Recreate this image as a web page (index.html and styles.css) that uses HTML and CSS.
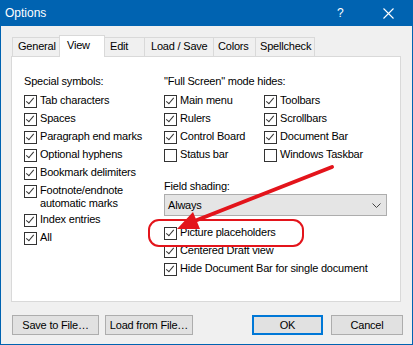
FILE: index.html
```html
<!DOCTYPE html>
<html>
<head>
<meta charset="utf-8">
<title>Options</title>
<link rel="stylesheet" href="styles.css">
</head>
<body>
<div class="window">
  <div class="titlebar">
    <span class="title">Options</span>
    <span class="help">?</span>
    <span class="close"><svg width="11" height="11" viewBox="0 0 11 11"><path d="M0.5 0.5L10.5 10.5M10.5 0.5L0.5 10.5" stroke="#fff" stroke-width="1.1" fill="none"/></svg></span>
  </div>
  <div class="content">
    <div class="tabs">
      <div class="tab t-general">General</div>
      <div class="tab t-view active">View</div>
      <div class="tab t-edit">Edit</div>
      <div class="tab t-load">Load / Save</div>
      <div class="tab t-colors">Colors</div>
      <div class="tab t-spell">Spellcheck</div>
    </div>
    <div class="panel">
      <div class="col col-left">
        <div class="group-label">Special symbols:</div>
        <div class="list">
          <div class="cb-row"><span class="cb on"></span><span class="lbl">Tab characters</span></div>
          <div class="cb-row"><span class="cb on"></span><span class="lbl">Spaces</span></div>
          <div class="cb-row"><span class="cb on"></span><span class="lbl">Paragraph end marks</span></div>
          <div class="cb-row"><span class="cb on"></span><span class="lbl">Optional hyphens</span></div>
          <div class="cb-row"><span class="cb on"></span><span class="lbl">Bookmark delimiters</span></div>
          <div class="cb-row tall"><span class="cb on"></span><span class="lbl">Footnote/endnote<br>automatic marks</span></div>
          <div class="cb-row"><span class="cb on"></span><span class="lbl">Index entries</span></div>
          <div class="cb-row"><span class="cb on"></span><span class="lbl">All</span></div>
        </div>
      </div>
      <div class="col col-right">
        <div class="group-label">"Full Screen" mode hides:</div>
        <div class="grid2">
          <div class="cb-row"><span class="cb on"></span><span class="lbl">Main menu</span></div>
          <div class="cb-row"><span class="cb on"></span><span class="lbl">Toolbars</span></div>
          <div class="cb-row"><span class="cb on"></span><span class="lbl">Rulers</span></div>
          <div class="cb-row"><span class="cb on"></span><span class="lbl">Scrollbars</span></div>
          <div class="cb-row"><span class="cb on"></span><span class="lbl">Control Board</span></div>
          <div class="cb-row"><span class="cb on"></span><span class="lbl">Document Bar</span></div>
          <div class="cb-row"><span class="cb"></span><span class="lbl">Status bar</span></div>
          <div class="cb-row"><span class="cb"></span><span class="lbl">Windows Taskbar</span></div>
        </div>
        <div class="field-label">Field shading:</div>
        <div class="select">
          <span class="select-text">Always</span>
          <svg class="chev" width="9" height="5" viewBox="0 0 9 5"><path d="M0.5 0.5L4.5 4.5L8.5 0.5" stroke="#444" stroke-width="1" fill="none"/></svg>
        </div>
        <div class="list list-bottom">
          <div class="cb-row"><span class="cb on"></span><span class="lbl">Picture placeholders</span></div>
          <div class="cb-row"><span class="cb on"></span><span class="lbl">Centered Draft view</span></div>
          <div class="cb-row"><span class="cb on"></span><span class="lbl">Hide Document Bar for single document</span></div>
        </div>
      </div>
    </div>
    <div class="buttons">
      <button class="btn b-save">Save to File…</button>
      <button class="btn b-load">Load from File…</button>
      <span class="spacer"></span>
      <button class="btn b-ok">OK</button>
      <button class="btn b-cancel">Cancel</button>
    </div>
  </div>
  <svg class="annot" width="413" height="345" viewBox="0 0 413 345">
    <rect x="149" y="220" width="154" height="26" rx="10" ry="10" fill="none" stroke="#e3141b" stroke-width="2"/>
    <line x1="332" y1="167" x2="192" y2="222" stroke="#e3141b" stroke-width="4" stroke-linecap="round"/>
    <polygon points="177,229 193,212 200,229" fill="#e3141b"/>
  </svg>
</div>
</body>
</html>
```
FILE: styles.css
```css
* { box-sizing: border-box; }
html, body { margin: 0; padding: 0; }
body {
  width: 413px;
  height: 345px;
  overflow: hidden;
  font-family: "Liberation Sans", Arial, sans-serif;
  font-size: 11px;
  letter-spacing: -0.2px;
  color: #000;
  background: #fff;
}
.window {
  position: relative;
  width: 413px;
  height: 345px;
  border: 1px solid #0063b1;
  background: #f0f0f0;
}
.titlebar {
  height: 25px;
  background: #0063b1;
  color: #fff;
  display: flex;
  align-items: center;
  font-size: 12px;
  letter-spacing: 0;
}
.title { padding-left: 4px; padding-bottom: 1px; flex: 1; }
.help { width: 10px; margin-right: 36px; font-size: 12px; padding-bottom: 1px; }
.close { width: 11px; height: 11px; margin-right: 18px; display: flex; }
.close svg { display: block; }

.content { padding: 9px 0 0 10px; }

.tabs {
  display: flex;
  align-items: flex-end;
  height: 21px;
  margin-left: 1px;
}
.tab {
  height: 19px;
  border: 1px solid #d9d9d9;
  border-bottom: none;
  background: #f0f0f0;
  margin-left: -1px;
  padding-left: 5px;
  line-height: 17px;
  white-space: nowrap;
}
.tab.t-general { margin-left: 0; width: 49px; }
.tab.active {
  height: 22px;
  margin-left: -2px;
  margin-bottom: -1px;
  background: #fff;
  position: relative;
  z-index: 2;
  padding-left: 7px;
  line-height: 18px;
  width: 46px;
}
.tab.t-edit { width: 41px; padding-left: 5px; }
.tab.t-load { width: 70px; padding-left: 6px; }
.tab.t-colors { width: 43px; padding-left: 4px; }
.tab.t-spell { width: 60px; padding-left: 4px; }

.panel {
  width: 390px;
  height: 246px;
  border: 1px solid #d9d9d9;
  background: #fff;
  display: flex;
  padding: 17px 0 0 12px;
}
.col-left { width: 140px; }
.col-right { width: 223px; }

.group-label { line-height: 15px; height: 15px; white-space: nowrap; }
.list {
  display: flex;
  flex-direction: column;
  gap: 5px;
  margin-top: 6px;
}
.cb-row {
  display: flex;
  align-items: flex-start;
  height: 13px;
  white-space: nowrap;
}
.cb-row.tall { height: 24px; }
.cb {
  flex: none;
  width: 13px;
  height: 13px;
  border: 1px solid #333;
  background: #fff;
  position: relative;
}
.cb.on::after {
  content: "";
  position: absolute;
  left: 3px;
  top: 0px;
  width: 3px;
  height: 7px;
  border-right: 1px solid #333;
  border-bottom: 1px solid #333;
  transform: rotate(40deg);
  transform-origin: 50% 50%;
}
.lbl {
  margin-left: 3px;
  margin-top: -1px;
  line-height: 13px;
}
.tall .lbl { line-height: 12.5px; }

.grid2 {
  display: grid;
  grid-template-columns: 100px auto;
  row-gap: 5px;
  margin-top: 6px;
}
.field-label {
  margin-top: 17px;
  line-height: 15px;
  height: 15px;
}
.select {
  width: 223px;
  height: 22px;
  border: 1px solid #adadad;
  background: #e5e5e5;
  display: flex;
  align-items: center;
  justify-content: space-between;
  padding: 0 5px 0 3px;
}
.select-text { padding-bottom: 1px; }
.chev { display: block; }
.list-bottom { margin-top: 11px; }

.buttons {
  display: flex;
  margin-top: 13px;
  margin-left: 1px;
  width: 391px;
}
.btn {
  height: 20px;
  border: 1px solid #adadad;
  background: #e1e1e1;
  font-family: "Liberation Sans", Arial, sans-serif;
  font-size: 11px;
  letter-spacing: -0.2px;
  color: #000;
  padding: 0;
  margin: 0;
}
.b-save { width: 87px; }
.b-load { width: 88px; margin-left: 6px; }
.spacer { flex: 1; }
.b-ok { width: 71px; border: 2px solid #0078d7; }
.b-cancel { width: 72px; margin-left: 8px; }

.annot {
  position: absolute;
  left: -1px;
  top: -1px;
  pointer-events: none;
  z-index: 5;
}
```
